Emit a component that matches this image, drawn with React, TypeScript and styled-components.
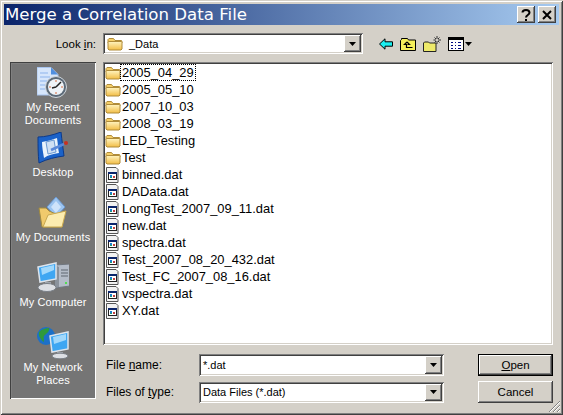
import React from 'react';
import styled, { createGlobalStyle } from 'styled-components';

const GlobalStyle = createGlobalStyle`
  html, body {
    margin: 0;
    padding: 0;
    background: #d4d0c8;
  }
  body {
    font-family: "Liberation Sans", Arial, sans-serif;
    font-size: 13px;
    color: #000;
  }
`;

const Dialog = styled.div`
  position: relative;
  width: 563px;
  height: 415px;
  box-sizing: border-box;
  padding: 4px 4px 0;
  background: #d4d0c8;
  box-shadow: inset 1px 1px 0 #d4d0c8, inset -1px -1px 0 #404040, inset 2px 2px 0 #fff, inset -2px -2px 0 #808080;
  overflow: hidden;
`;

const TitleBar = styled.div`
  display: flex;
  align-items: center;
  justify-content: space-between;
  height: 21px;
  padding: 0 3px 0 1px;
  background: linear-gradient(90deg, #0a246a 0%, #a6caf0 100%);
`;

const TitleText = styled.span`
  font-family: "DejaVu Sans", sans-serif;
  font-size: 16.6px;
  color: #fff;
  white-space: nowrap;
`;

const CaptionButtons = styled.div`
  display: flex;
  gap: 3px;
`;

const CaptionButton = styled.button`
  width: 18px;
  height: 17px;
  padding: 0;
  display: flex;
  align-items: center;
  justify-content: center;
  border: none;
  background: #d4d0c8;
  box-shadow: inset -1px -1px 0 #404040, inset 1px 1px 0 #fff, inset -2px -2px 0 #808080;
`;

const Body = styled.div`
  padding: 8px 6px 0;
  display: flex;
  flex-direction: column;
  gap: 8px;
`;

const LookRow = styled.div`
  display: flex;
  align-items: center;
  height: 21px;
`;

const LookLabel = styled.label`
  width: 86px;
  margin-right: 7px;
  text-align: right;
  font-size: 11.5px;
  white-space: nowrap;
`;

const Combo = styled.div<{ $width: number; $height: number }>`
  width: ${(p) => p.$width}px;
  height: ${(p) => p.$height}px;
  box-sizing: border-box;
  display: flex;
  align-items: center;
  background: #fff;
  padding: 2px;
  box-shadow: inset 1px 1px 0 #808080, inset -1px -1px 0 #fff, inset 2px 2px 0 #404040, inset -2px -2px 0 #d4d0c8;
`;

const ComboValue = styled.div`
  flex: 1;
  display: flex;
  align-items: center;
  gap: 6px;
  padding-left: 2px;
  font-size: 11px;
  white-space: nowrap;
  overflow: hidden;
`;

const ComboArrow = styled.div`
  width: 17px;
  align-self: stretch;
  flex: none;
  display: flex;
  align-items: center;
  justify-content: center;
  background: #d4d0c8;
  box-shadow: inset -1px -1px 0 #404040, inset 1px 1px 0 #fff, inset -2px -2px 0 #808080;
`;

const Tools = styled.div`
  display: flex;
  align-items: center;
  margin-left: 16px;
  gap: 7px;
`;

const Main = styled.div`
  display: flex;
  gap: 7px;
`;

const Places = styled.nav`
  width: 86px;
  height: 337px;
  box-sizing: border-box;
  padding: 2px 0;
  background: #757575;
  box-shadow: inset 1px 1px 0 #404040, inset -1px -1px 0 #fff, inset 2px 2px 0 #808080;
`;

const Place = styled.div`
  height: 65px;
  box-sizing: border-box;
  padding-top: 3px;
  display: flex;
  flex-direction: column;
  align-items: center;
  color: #fff;
  font-size: 11px;
  letter-spacing: 0.1px;
  line-height: 13px;
  text-align: center;
`;

const PlaceLabel = styled.span`
  margin-top: 2px;
  width: 76px;
`;

const RightColumn = styled.div`
  display: flex;
  flex-direction: column;
  gap: 9px;
  width: 450px;
`;

const FileList = styled.div`
  height: 283px;
  box-sizing: border-box;
  padding: 2px 2px 0 2px;
  background: #fff;
  box-shadow: inset 1px 1px 0 #808080, inset -1px -1px 0 #fff, inset 2px 2px 0 #404040, inset -2px -2px 0 #d4d0c8;
`;

const FileRow = styled.div`
  display: flex;
  align-items: center;
  height: 17px;
`;

const FileName = styled.span<{ $focused?: boolean }>`
  font-size: 12.9px;
  line-height: 15px;
  padding: 0 1px;
  white-space: nowrap;
  outline: ${(p) => (p.$focused ? '1px dotted #000' : 'none')};
  outline-offset: 0;
`;

const Form = styled.div`
  display: grid;
  grid-template-columns: 96px 245px 75px;
  grid-template-rows: 22px 22px;
  row-gap: 5px;
  justify-content: start;
  align-items: center;
`;

const FormLabel = styled.label`
  padding-left: 3px;
  font-size: 12px;
  white-space: nowrap;
`;

const ActionButton = styled.button<{ $primary?: boolean }>`
  width: 75px;
  height: 22px;
  margin-left: 34px;
  padding: 0;
  border: none;
  font-family: "Liberation Sans", Arial, sans-serif;
  font-size: 11.5px;
  color: #000;
  background: #d4d0c8;
  box-shadow: ${(p) =>
    p.$primary
      ? 'inset 0 0 0 1px #000, inset -2px -2px 0 #404040, inset 2px 2px 0 #fff, inset -3px -3px 0 #808080'
      : 'inset -1px -1px 0 #404040, inset 1px 1px 0 #fff, inset -2px -2px 0 #808080'};
`;

const Grip = styled.svg`
  position: absolute;
  right: 2px;
  bottom: 2px;
`;

const Arrow = () => (
  <svg width="7" height="4" viewBox="0 0 7 4">
    <path d="M0 0h7L3.5 4z" fill="#000" />
  </svg>
);

const FolderIcon = () => (
  <svg width="16" height="16" viewBox="0 0 16 16" style={{ flex: 'none' }}>
    <defs>
      <linearGradient id="fold" x1="0" y1="0" x2="0" y2="1">
        <stop offset="0" stopColor="#fff4c0" />
        <stop offset="1" stopColor="#f2bd45" />
      </linearGradient>
    </defs>
    <path d="M1 5V3.500L2 2.500h4.500l1.500 2h6.500L15 5.500V7H1z" fill="#f5cf68" stroke="#b08c3a" />
    <path d="M1.500 5.500h13l.5 1v6.500l-1 1H2l-1-1V6.500z" fill="url(#fold)" stroke="#b08c3a" />
  </svg>
);

const DatIcon = () => (
  <svg width="16" height="16" viewBox="0 0 16 16" style={{ flex: 'none' }}>
    <path d="M1.500.5h9.500l2 2v13H1.500z" fill="#f2f2f2" stroke="#555" />
    <rect x="3.500" y="5.500" width="8" height="7" fill="#fff" stroke="#222" />
    <rect x="3" y="5" width="9" height="2" fill="#0a246a" />
    <rect x="5" y="8" width="2" height="2" fill="#1a7fd0" />
    <rect x="8" y="9" width="2" height="2" fill="#c04040" />
    <rect x="5" y="10" width="2" height="1" fill="#1a9a70" />
  </svg>
);

const BackIcon = () => (
  <svg width="14" height="12" viewBox="0 0 14 12">
    <path d="M.5 6 6 .8v3h7.500v4.400H6v3z" fill="#19f0f0" stroke="#000" />
  </svg>
);

const UpIcon = () => (
  <svg width="16" height="14" viewBox="0 0 16 14">
    <path d="M.5 13.500v-10l1-1V1.500h6l1 1.500h7v10.500z" fill="#f5f05a" stroke="#000" />
    <path d="M7 5 4.500 7.500h2V10.500H12.500M7 5l2.500 2.500h-2" fill="none" stroke="#000" strokeWidth="1.200" />
  </svg>
);

const NewFolderIcon = () => (
  <svg width="18" height="16" viewBox="0 0 18 16">
    <path d="M.5 15.500V7l1-1h4l1 1h6.500v8.500z" fill="#eeea6a" stroke="#222" />
    <path d="M14 0v3M14 5v3M10.500 4h2.500M15 4h3M11.500 1.500l1.500 1.500M16.500 1.500 15 3M11.500 6.500 13 5M16.500 6.500 15 5" stroke="#333" strokeWidth="1" />
  </svg>
);

const ViewIcon = () => (
  <svg width="16" height="14" viewBox="0 0 16 14">
    <rect x=".5" y=".5" width="15" height="13" fill="#fff" stroke="#000" />
    <rect x="1" y="1" width="14" height="2" fill="#000" />
    <path d="M3 5h2v1H3zM7 5h1v1H7zM10 5h3v1h-3zM3 8h2v1H3zM7 8h1v1H7zM10 8h3v1h-3zM3 11h2v1H3zM7 11h1v1H7zM10 11h3v1h-3z" fill="#000a80" />
  </svg>
);

const RecentIcon = () => (
  <svg width="32" height="32" viewBox="0 0 32 32">
    <path d="M0 .5h14l7 7V28H0z" fill="#d6e6fb" stroke="#a8c4ee" />
    <path d="M14 .5l7 7h-7z" fill="#4f8fe0" />
    <path d="M3 6h8M3 10h10M3 14h7M3 18h5M3 22h5" stroke="#8db4ec" />
    <circle cx="19" cy="20" r="10.500" fill="#5c6a78" stroke="#cfd5da" />
    <circle cx="19" cy="20" r="8" fill="#eef3f7" />
    <path d="M19 20l5-5M19 20l-4 1" stroke="#222" strokeWidth="1.500" />
    <path d="M19 13v2M26 20h-2M12 20h2M19 27v-2" stroke="#d46a40" />
  </svg>
);

const DesktopIcon = () => (
  <svg width="32" height="32" viewBox="0 0 32 32">
    <path d="M1 5C8 5 16 3 24 0c1 9 2 16 3 24-8 1-17 3-25 7-1-9-1-17-1-26z" fill="#1b62c8" stroke="#0d3a8a" />
    <path d="M5 10c5-1 10-2 15-4 1 6 1 11 2 15-6 1-11 2-15 5-1-6-2-11-2-16z" fill="#eaf3fc" />
    <path d="M9 10l8-2 2 12-8 2z" fill="#cfe0f4" stroke="#6a98d0" />
    <path d="M14 18 27 12" stroke="#5a88d8" strokeWidth="2.500" />
    <circle cx="29" cy="11" r="2" fill="#c83020" />
  </svg>
);

const DocumentsIcon = () => (
  <svg width="32" height="32" viewBox="0 0 32 32">
    <path d="M10 10 19 0l9 10-9 10z" fill="#9cc4f0" stroke="#6a98d0" />
    <path d="M14 10l5-6 5 6-5 6z" fill="#cfe3fa" />
    <path d="M2 11h7l3 3 7 3 9-2-3 15H5z" fill="#f0ca6c" stroke="#a08a40" />
    <path d="M6 30l5-12 18-4-4 16z" fill="#fcecb0" stroke="#c8a850" />
  </svg>
);

const ComputerIcon = () => (
  <svg width="32" height="32" viewBox="0 0 32 32">
    <path d="M18 3l15-1v22l-15 2z" fill="#b4bcc8" stroke="#70767f" />
    <path d="M18 3l4 2v20l-4 1z" fill="#8a929c" />
    <path d="M24 8h7M24 11h7M24 14h7" stroke="#5f6670" />
    <rect x="28" y="20" width="2" height="2" fill="#50e050" />
    <path d="M1 5 19 1v16L3 20z" fill="#3ea6f2" stroke="#dde4ec" strokeWidth="1.500" />
    <path d="M4 6 17 3v5L5 13z" fill="#a2d8fb" />
    <path d="M8 20h6v4H8z" fill="#a0a6ae" />
    <ellipse cx="10" cy="25.500" rx="9" ry="4" fill="#dcdfe4" stroke="#7a8088" />
  </svg>
);

const NetworkIcon = () => (
  <svg width="32" height="32" viewBox="0 0 32 32">
    <circle cx="9" cy="9" r="9" fill="#1c70c8" />
    <path d="M2 5c3-3 7-4 10-4 1 3-2 5-4 7-2 1-1 4-1 7-3-2-6-6-5-10zM13 9c2-1 4 0 4 2-1 3-3 4-4 3z" fill="#2f9a3a" />
    <path d="M13 9 31 5v17l-16 3z" fill="#3ea6f2" stroke="#dde4ec" strokeWidth="1.500" />
    <path d="M16 10l13-3v6l-12 4z" fill="#a2d8fb" />
    <path d="M20 25h6v3h-6z" fill="#a0a6ae" />
    <ellipse cx="23" cy="29" rx="8" ry="2.800" fill="#dcdfe4" stroke="#7a8088" />
  </svg>
);

const places = [
  { label: 'My Recent Documents', icon: <RecentIcon /> },
  { label: 'Desktop', icon: <DesktopIcon /> },
  { label: 'My Documents', icon: <DocumentsIcon /> },
  { label: 'My Computer', icon: <ComputerIcon /> },
  { label: 'My Network Places', icon: <NetworkIcon /> },
];

const folders = ['2005_04_29', '2005_05_10', '2007_10_03', '2008_03_19', 'LED_Testing', 'Test'];
const files = [
  'binned.dat',
  'DAData.dat',
  'LongTest_2007_09_11.dat',
  'new.dat',
  'spectra.dat',
  'Test_2007_08_20_432.dat',
  'Test_FC_2007_08_16.dat',
  'vspectra.dat',
  'XY.dat',
];

const App = () => {
  return (
    <Dialog>
      <GlobalStyle />
      <TitleBar>
        <TitleText>Merge a Correlation Data File</TitleText>
        <CaptionButtons>
          <CaptionButton title="Help">
            <svg width="10" height="12" viewBox="0 0 10 12">
              <path d="M1.500 3.500C1.500 1.500 3 1 5 1s3.500 1 3.500 2.800C8.500 6 5 6 5 8.500" fill="none" stroke="#000" strokeWidth="2" />
              <rect x="4" y="10" width="2" height="2" fill="#000" />
            </svg>
          </CaptionButton>
          <CaptionButton title="Close">
            <svg width="10" height="10" viewBox="0 0 10 10">
              <path d="M1 1l8 8M9 1 1 9" stroke="#000" strokeWidth="2" />
            </svg>
          </CaptionButton>
        </CaptionButtons>
      </TitleBar>

      <Body>
        <LookRow>
          <LookLabel>
            Look <u>i</u>n:
          </LookLabel>
          <Combo $width={260} $height={21}>
            <ComboValue>
              <FolderIcon />
              _Data
            </ComboValue>
            <ComboArrow>
              <Arrow />
            </ComboArrow>
          </Combo>
          <Tools>
            <BackIcon />
            <UpIcon />
            <NewFolderIcon />
            <ViewIcon />
          </Tools>
          <svg width="7" height="4" viewBox="0 0 7 4" style={{ marginLeft: 1 }}>
            <path d="M0 0h7L3.500 4z" fill="#000" />
          </svg>
        </LookRow>

        <Main>
          <Places>
            {places.map((place) => (
              <Place key={place.label}>
                {place.icon}
                <PlaceLabel>{place.label}</PlaceLabel>
              </Place>
            ))}
          </Places>

          <RightColumn>
            <FileList>
              {folders.map((name, i) => (
                <FileRow key={name}>
                  <FolderIcon />
                  <FileName $focused={i === 0}>{name}</FileName>
                </FileRow>
              ))}
              {files.map((name) => (
                <FileRow key={name}>
                  <DatIcon />
                  <FileName>{name}</FileName>
                </FileRow>
              ))}
            </FileList>

            <Form>
              <FormLabel>
                File <u>n</u>ame:
              </FormLabel>
              <Combo $width={245} $height={22}>
                <ComboValue>*.dat</ComboValue>
                <ComboArrow>
                  <Arrow />
                </ComboArrow>
              </Combo>
              <ActionButton $primary>
                <u>O</u>pen
              </ActionButton>
              <FormLabel>
                Files of <u>t</u>ype:
              </FormLabel>
              <Combo $width={245} $height={21}>
                <ComboValue>Data Files (*.dat)</ComboValue>
                <ComboArrow>
                  <Arrow />
                </ComboArrow>
              </Combo>
              <ActionButton>Cancel</ActionButton>
            </Form>
          </RightColumn>
        </Main>
      </Body>

      <Grip width="13" height="13" viewBox="0 0 13 13">
        <path d="M12 1 1 12M12 5 5 12M12 9 9 12" stroke="#808080" />
        <path d="M12 2 2 12M12 6 6 12M12 10 10 12" stroke="#fff" />
      </Grip>
    </Dialog>
  );
};

export default App;
